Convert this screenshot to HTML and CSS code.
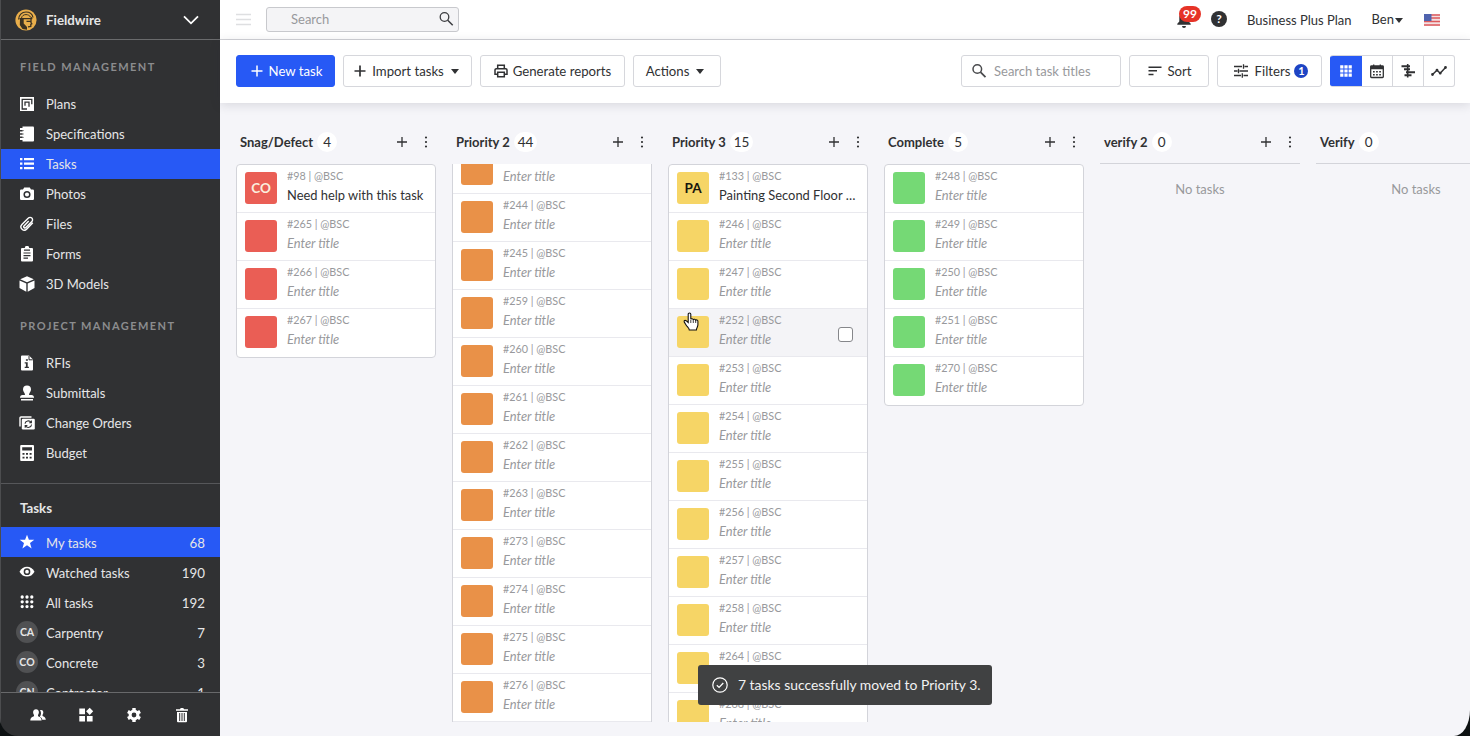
FILE: index.html
```
<!DOCTYPE html>
<html lang="en">
<head>
    <meta charset="UTF-8">
    <meta name="viewport" content="width=device-width, initial-scale=1.0">
    <title>Fieldwire - Tasks</title>
    <link rel="stylesheet" href="styles.css">
</head>
<body>
    <div class="app">
        <aside class="sidebar">
            <div class="brand">
                <svg class="logo" viewBox="0 0 22 22">
                    <circle cx="11" cy="11" r="10.6" fill="#e9ae4b"/>
                    <path d="M3.600 10.500C3.600 6 6.800 3 11 3c3.600 0 6.300 2 7 5.500" fill="none" stroke="#3a3122" stroke-width="1.200"/>
                    <path d="M6.500 9C7 6.800 8.600 5.600 11 5.600c2 0 3.800.9 4.500 2.600l1.800.8" fill="none" stroke="#3a3122" stroke-width="1"/>
                    <path d="M4.500 9.700h12.700M11.500 12.300h4.300M16 10v3.500l.8 1.300-1 .6v2l-2.800.4" fill="none" stroke="#3a3122" stroke-width="1.300"/>
                    <path d="M5 10h3.700v4.500l3.300 3.500v2.800l-4.500-.8L4.800 16z" fill="#3a3122"/>
                </svg>
                <span>Fieldwire</span>
                <svg class="chevron" viewBox="0 0 16 10"><path d="M1 1.300l7 7 7-7" fill="none" stroke="#fff" stroke-width="1.800"/></svg>
            </div>
            <nav class="menu">
                <h2>Field management</h2>
                <a class="item">
                    <svg viewBox="0 0 16 16"><path d="M1 1h14v14H1z" fill="#fff"/><path d="M8 13H3.200V3.300h9.600v5M6 9.800V6.200h4v4.600" fill="none" stroke="#303133" stroke-width="1.300"/></svg>
                    <span>Plans</span>
                </a>
                <a class="item">
                    <svg viewBox="0 0 16 16"><path d="M3.500.5H14a1 1 0 0 1 1 1v13a1 1 0 0 1-1 1H3.500z" fill="#fff"/><path d="M1 3h3M1 6.300h3M1 9.700h3M1 13h3" stroke="#fff" stroke-width="1.800"/><path d="M3.500 4.600h1M3.500 8h1M3.500 11.400h1" stroke="#303133"/></svg>
                    <span>Specifications</span>
                </a>
                <a class="item active">
                    <svg viewBox="0 0 16 16"><path d="M1 3.200h2.400M1 7.700h2.400M1 12.200h2.400M5 3.200h10M5 7.700h10M5 12.200h10" stroke="#fff" stroke-width="2.200"/></svg>
                    <span>Tasks</span>
                </a>
                <a class="item">
                    <svg viewBox="0 0 16 16"><path d="M5.200 1.500h5.600l1.200 2h1.800a1.200 1.200 0 0 1 1.200 1.200v8.100a1.200 1.200 0 0 1-1.200 1.200H2.200A1.200 1.200 0 0 1 1 12.800V4.700a1.200 1.200 0 0 1 1.200-1.200H4z" fill="#fff"/><circle cx="8" cy="8.500" r="2.800" fill="#fff" stroke="#303133" stroke-width="1.500"/></svg>
                    <span>Photos</span>
                </a>
                <a class="item">
                    <svg viewBox="0 0 16 16"><path d="M13.800 6.800l-6 6.300a3.300 3.300 0 0 1-4.900-4.600l6.500-6.400a2.400 2.400 0 0 1 3.500 3.300l-6 6.100a1.200 1.200 0 0 1-1.900-1.600l4.700-4.900" fill="none" stroke="#fff" stroke-width="1.400"/></svg>
                    <span>Files</span>
                </a>
                <a class="item">
                    <svg viewBox="0 0 16 16"><path d="M3 2h2.800a2.200 2.200 0 0 1 4.400 0H13a1 1 0 0 1 1 1v11.500a1 1 0 0 1-1 1H3a1 1 0 0 1-1-1V3a1 1 0 0 1 1-1z" fill="#fff"/><path d="M5 4.200h6M4.500 7h7M4.500 9.600h7M4.500 12.200h4.500" stroke="#303133" stroke-width="1.200"/></svg>
                    <span>Forms</span>
                </a>
                <a class="item">
                    <svg viewBox="0 0 16 16"><path d="M8 .3l6.800 2.900L8 6.200 1.200 3.200zM.5 4.500l6.800 3v8.200l-6.800-3.600zM15.500 4.500l-6.800 3v8.200l6.800-3.600z" fill="#fff"/></svg>
                    <span>3D Models</span>
                </a>
                <h2>Project management</h2>
                <a class="item">
                    <svg viewBox="0 0 16 16"><path d="M3 .5h7l4 4v10a1 1 0 0 1-1 1H3a1 1 0 0 1-1-1v-13a1 1 0 0 1 1-1z" fill="#fff"/><path d="M10 1v3.800h3.800" fill="none" stroke="#303133"/><path d="M6.900 4.200h2v1.600h-2zM5.700 7.200h3v4.500h1.200v1.200H5.700v-1.200h1.200V8.400H5.700z" fill="#303133"/></svg>
                    <span>RFIs</span>
                </a>
                <a class="item">
                    <svg viewBox="0 0 16 16"><path d="M8 .5a4 4 0 0 1 4 4c0 2.500-2 3-2 5.500h2.500A2.500 2.500 0 0 1 15 12v.8H1V12a2.500 2.500 0 0 1 2.500-2H6c0-2.500-2-3-2-5.500a4 4 0 0 1 4-4zM2 14h12v1.500H2z" fill="#fff"/></svg>
                    <span>Submittals</span>
                </a>
                <a class="item">
                    <svg viewBox="0 0 16 16"><path d="M1 11.500V3a1 1 0 0 1 1-1h10.500" fill="none" stroke="#fff" stroke-width="1.400"/><rect x="2.800" y="3.800" width="13" height="10.700" rx="1.200" fill="#fff"/><path d="M6 8.700a3.300 3.300 0 0 1 6-1.400M12.600 9.500a3.300 3.300 0 0 1-6 1.500M12.400 5.500v2.200h-2.200M6.200 12.800v-2.200h2.200" fill="none" stroke="#303133" stroke-width="1.100"/></svg>
                    <span>Change Orders</span>
                </a>
                <a class="item">
                    <svg viewBox="0 0 16 16"><rect x="1.200" y="0" width="13.800" height="16" rx="1" fill="#fff"/><path d="M3.200 2.300h9.800v3.300H3.200zM3.500 8h2v1.800h-2zM7 8h2v1.800H7zM10.600 8h2v1.800h-2zM3.500 11.800h2v1.800h-2zM7 11.800h2v1.800H7zM10.600 11.800h2v1.800h-2z" fill="#303133"/></svg>
                    <span>Budget</span>
                </a>
            </nav>
            <div class="filters">
                <h3>Tasks</h3>
                <a class="item active">
                    <svg viewBox="0 0 16 16"><path d="M8 .8l1.900 5h5.400l-4.300 3.300 1.600 5.400L8 11.300l-4.600 3.200L5 9.100.7 5.800h5.400z" fill="#fff"/></svg>
                    <span>My tasks</span><b>68</b>
                </a>
                <a class="item">
                    <svg viewBox="0 0 16 16"><path d="M.5 7.700C2.200 4.500 5 2.800 8 2.800s5.800 1.700 7.500 4.900C13.800 10.900 11 12.600 8 12.600S2.200 10.900.5 7.700z" fill="#fff"/><circle cx="8" cy="7.700" r="2.600" fill="none" stroke="#303133" stroke-width="1.500"/></svg>
                    <span>Watched tasks</span><b>190</b>
                </a>
                <a class="item">
                    <svg viewBox="0 0 16 16"><path d="M3.200 3h0M8 3h0M12.800 3h0M3.200 7.800h0M8 7.800h0M12.800 7.800h0M3.200 12.600h0M8 12.600h0M12.800 12.600h0" stroke="#fff" stroke-width="3.300" stroke-linecap="round"/></svg>
                    <span>All tasks</span><b>192</b>
                </a>
                <a class="item"><i>CA</i><span>Carpentry</span><b>7</b></a>
                <a class="item"><i>CO</i><span>Concrete</span><b>3</b></a>
                <a class="item"><i>CN</i><span>Contractor</span><b>1</b></a>
            </div>
            <div class="bottom">
                <svg viewBox="0 0 16 16"><path d="M10 3.200c2-.9 3.600.3 3.300 2.600-.1 1.200-.8 1.800-.8 2.600 0 1.200 3.300 1 3.300 4.300h-3.500c-.2-2-1.700-2.500-2.500-3 1.500-2 1.700-4.400.2-6.500z" fill="#fff"/><path d="M6 2.300c2 0 3 1.300 2.900 3.200-.1 1.500-1 2.200-1 3 0 1.500 3.700 1.200 3.700 4.900H.3c0-3.700 3.800-3.400 3.800-4.900 0-.8-.9-1.500-1-3C3 3.600 4 2.300 6 2.300z" fill="#fff"/></svg>
                <svg viewBox="0 0 16 16"><path d="M1.300 1.500h5.700v5.700H1.300zM1.300 8.900h5.700v5.700H1.300zM8.900 8.900h5.700v5.700H8.900zM11.700.7l3.500 3.600-3.500 3.600-3.600-3.600z" fill="#fff"/></svg>
                <svg viewBox="0 0 16 16"><circle cx="8" cy="8" r="3.900" fill="none" stroke="#fff" stroke-width="3"/><path d="M8 1v2.500M8 12.500V15M1.900 4.500l2.200 1.200M11.900 10.300l2.200 1.200M1.900 11.500l2.200-1.200M11.900 5.700l2.200-1.200" stroke="#fff" stroke-width="3.400"/></svg>
                <svg viewBox="0 0 16 16"><path d="M2 2.300h4l.7-1.300h2.600l.7 1.300h4v1.500H2zM3 5h10v9.300a1 1 0 0 1-1 1H4a1 1 0 0 1-1-1z" fill="#fff"/><path d="M5.700 6v8M8 6v8M10.300 6v8" stroke="#303133" stroke-width="1"/></svg>
            </div>
        </aside>
        <main class="main">
            <header class="topbar">
                <svg class="burger" viewBox="0 0 16 14"><path d="M0 1.500h15M0 6.500h15M0 11.500h15" stroke="#dedfe1" stroke-width="1.500"/></svg>
                <div class="search">
                    <span>Search</span>
                    <svg viewBox="0 0 16 16"><circle cx="6.500" cy="6" r="4.300" fill="none" stroke="#3c3d40" stroke-width="1.300"/><path d="M9.700 9.200l5 5" stroke="#3c3d40" stroke-width="1.500"/></svg>
                </div>
                <div class="account">
                    <div class="bell">
                        <svg viewBox="0 0 16 18"><path d="M8 1.500c3 0 4.700 2.200 4.700 5v4l2 2.300v.9H1.300v-.9l2-2.300v-4c0-2.800 1.700-5 4.700-5zM6 15h4a2 2 0 0 1-4 0z" fill="#303133"/></svg>
                        <span class="alert">99</span>
                    </div>
                    <div class="help">?</div>
                    <span class="plan">Business Plus Plan</span>
                    <span class="user">Ben<em class="caret"></em></span>
                    <svg class="flag" viewBox="0 0 16 12"><path d="M0 0h16v12H0z" fill="#f3dfe0"/><path d="M0 1h16M0 4h16M0 7.500h16M0 11h16" stroke="#dd5a5c" stroke-width="1.500"/><path d="M0 0h7.500v7H0z" fill="#4f63ae"/></svg>
                </div>
            </header>
            <div class="toolbar">
                <button class="btn primary"><svg viewBox="0 0 12 12"><path d="M6 .5v11M.5 6h11" stroke="#fff" stroke-width="1.500"/></svg>New task</button>
                <button class="btn import"><svg viewBox="0 0 12 12"><path d="M6 .5v11M.5 6h11" stroke="#303133" stroke-width="1.700"/></svg>Import tasks<em class="caret"></em></button>
                <button class="btn reports"><svg viewBox="0 0 14 14"><path d="M3.700 4.500V1.300h6.600v3.200M3.500 10.200H1V6a1.300 1.300 0 0 1 1.300-1.300h9.400A1.300 1.300 0 0 1 13 6v4.200h-2.500M3.700 8.300h6.600v4.500H3.700z" fill="none" stroke="#303133" stroke-width="1.500"/></svg>Generate reports</button>
                <button class="btn actions">Actions<em class="caret"></em></button>
                <div class="task-search">
                    <svg viewBox="0 0 16 16"><circle cx="6.300" cy="6" r="4.300" fill="none" stroke="#4a4b4e" stroke-width="1.500"/><path d="M9.500 9.200l5 5" stroke="#4a4b4e" stroke-width="1.800"/></svg>
                    <span>Search task titles</span>
                </div>
                <button class="btn sort"><svg viewBox="0 0 14 10"><path d="M.5 1.200h13M.5 4.800h8.500M.5 8.400h5" stroke="#303133" stroke-width="1.500"/></svg>Sort</button>
                <button class="btn filter"><svg viewBox="0 0 14 14"><path d="M0 2.500h8M10.500 2.500H14M9.500.3v4.400M0 7h3.500M5.500 7H14M4.500 4.800v4.400M0 11.500h7M9.500 11.500H14M8.300 9.300v4.400" stroke="#303133" stroke-width="1.300"/></svg>Filters<span class="count">1</span></button>
                <div class="views">
                    <div class="view on"><svg viewBox="0 0 16 16"><path d="M2.200 2.200h3.200v3.200H2.200zM6.400 2.200h3.200v3.200H6.400zM10.600 2.200h3.200v3.200h-3.200zM2.200 6.400h3.200v3.200H2.200zM6.400 6.400h3.200v3.200H6.400zM10.600 6.400h3.200v3.200h-3.200zM2.200 10.600h3.200v3.200H2.200zM6.400 10.600h3.200v3.200H6.400zM10.600 10.600h3.200v3.200h-3.200z" fill="#fff"/></svg></div>
                    <div class="view"><svg viewBox="0 0 16 16"><path d="M2.500 3h11a.8.8 0 0 1 .8.800v9.900a.8.8 0 0 1-.8.800h-11a.8.8 0 0 1-.8-.8V3.800a.8.8 0 0 1 .8-.8zM4.700 1.500v2M11.300 1.500v2" fill="none" stroke="#303133" stroke-width="1.300"/><path d="M1.700 3h12.600v3.300H1.700z" fill="#303133"/><path d="M4 8.700h8M4 11.800h8" stroke="#303133" stroke-width="1.500" stroke-dasharray="1.700 1.400"/></svg></div>
                    <div class="view"><svg viewBox="0 0 16 16"><path d="M7.700 1v13.500" stroke="#303133" stroke-width="1.600"/><path d="M1.500 3.300h8.500M4 6.300h6M6 9.300h9M4.500 12.300h7" stroke="#303133" stroke-width="1.900"/></svg></div>
                    <div class="view"><svg viewBox="0 0 16 16"><path d="M1.500 11.500L6 7.200l3.200 3L14.500 4.500" fill="none" stroke="#303133" stroke-width="1.500"/><path d="M1.500 11.500h0M6 7.200h0M9.200 10.200h0M14.500 4.500h0" stroke="#303133" stroke-width="2.800" stroke-linecap="round"/></svg></div>
                </div>
            </div>
            <section class="board" id="board"></section>
        </main>
        <div class="toast">
            <svg viewBox="0 0 16 16"><circle cx="8" cy="8" r="7.200" fill="none" stroke="#fff" stroke-width="1.200"/><path d="M4.800 8.200l2.300 2.200 4.200-4.400" fill="none" stroke="#fff" stroke-width="1.300"/></svg>
            <span>7 tasks successfully moved to Priority 3.</span>
        </div>
        <svg class="pointer" viewBox="0 0 16 20"><path d="M5.200 10.500V2.300a1.300 1.300 0 0 1 2.600 0v5c.3-.9 2.300-.8 2.500.4.500-.8 2.200-.6 2.400.6.600-.7 2.200-.4 2.200 1v3.500c0 2.200-1.500 3-1.500 5.200H6.300c0-1.800-2.300-3.200-3.400-5.300L1.200 9.900c-.5-1.200.9-2 1.900-1.200z" fill="#fff" stroke="#111" stroke-width="1.100"/><path d="M7.800 8v3M10.300 8.500V11M12.700 9v2" stroke="#111" stroke-width=".8"/></svg>
    </div>
    <script>
        const columns = [
            {name:'Snag/Defect',count:4,color:'red',tasks:[98,265,266,267]},
            {name:'Priority 2',count:44,color:'orange',scrolled:true,tasks:[243,244,245,259,260,261,262,263,273,274,275,276,277]},
            {name:'Priority 3',count:15,color:'yellow',tasks:[133,246,247,252,253,254,255,256,257,258,264,268,269]},
            {name:'Complete',count:5,color:'green',tasks:[248,249,250,251,270]},
            {name:'verify 2',count:0,tasks:[]},
            {name:'Verify',count:0,tasks:[]}
        ];
        const named = {
            98:{tag:'CO',title:'Need help with this task'},
            133:{tag:'PA',title:'Painting Second Floor Lobby'}
        };
        const hovered = 252;
        function card(id,color){
            const info = named[id];
            return `<div class="card ${id===hovered?'hover':''}">
                <div class="swatch ${color}">${info?info.tag:''}</div>
                <div class="text">
                    <small>#${id} | @BSC</small>
                    <p class="${info?'':'empty'}">${info?info.title:'Enter title'}</p>
                </div>
                ${id===hovered?'<div class="check"></div>':''}
            </div>`;
        }
        document.getElementById('board').innerHTML = columns.map(col=>`
            <div class="column">
                <div class="column-head">
                    <strong>${col.name}</strong>
                    <span class="total">${col.count}</span>
                    <svg class="add" viewBox="0 0 10 10"><path d="M5 0v10M0 5h10" stroke="#303133" stroke-width="1.300"/></svg>
                    <svg class="more" viewBox="0 0 4 12"><path d="M2 1.500h0M2 6h0M2 10.500h0" stroke="#303133" stroke-width="2.200" stroke-linecap="round"/></svg>
                </div>
                ${col.tasks.length
                    ?`<div class="scroll"><div class="list ${col.scrolled?'scrolled':''}">${col.tasks.map(id=>card(id,col.color)).join('')}</div></div>`
                    :'<div class="none">No tasks</div>'}
            </div>`).join('');
    </script>
</body>
</html>
```

FILE: styles.css
```
*{
    box-sizing: border-box;
}
body{
    margin: 0;
    background-color: #0d1112;
    font-family: Lato, "Liberation Sans", sans-serif;
    font-size: 13px;
    color: #303133;
    overflow: hidden;
}
svg{
    display: block;
    flex: none;
}
h2, h3, p{
    margin: 0;
}
.app{
    display: flex;
    position: relative;
    height: 736px;
    border-radius: 0 0 16px 18px / 0 0 26px 18px;
    overflow: hidden;
}

/* sidebar */
.sidebar{
    width: 220px;
    flex: none;
    display: flex;
    flex-direction: column;
    background-color: #303133;
    color: #e6e6e7;
    border-left: 1px solid #4c4d4f;
}
.brand{
    height: 40px;
    display: flex;
    align-items: center;
    padding: 0 21px 0 14px;
    border-bottom: 1px solid #6a6b6d;
    font-size: 13.3px;
    font-weight: bold;
}
.logo{
    width: 22px;
    height: 22px;
    margin-right: 9px;
}
.chevron{
    width: 16px;
    height: 10px;
    margin-left: auto;
}
.menu{
    height: 444px;
    border-bottom: 1px solid #56575a;
}
.menu h2{
    height: 49px;
    padding-left: 19px;
    font-size: 11px;
    line-height: 54px;
    letter-spacing: 1.45px;
    text-transform: uppercase;
    color: #8b8c8e;
    font-weight: bold;
}
.item{
    display: flex;
    align-items: center;
    height: 30px;
    padding: 0 15px 0 18px;
}
.menu .item span{
    padding-bottom: 1px;
}
.item svg{
    width: 16px;
    height: 16px;
    margin-right: 11px;
}
.item b{
    margin-left: auto;
    font-size: 13.3px;
    font-weight: normal;
}
.item i{
    width: 22px;
    height: 22px;
    margin: -1px 8px 0 -3px;
    border-radius: 50%;
    background-color: #505153;
    font-size: 10.5px;
    font-style: normal;
    font-weight: bold;
    line-height: 22px;
    text-align: center;
}
.active{
    background-color: #2759f5;
}
.filters{
    height: 208px;
    overflow: hidden;
}
.filters .item{
    padding-top: 1px;
}
.filters .item svg{
    margin-top: -1px;
}
.filters h3{
    height: 43px;
    padding-left: 19px;
    font-size: 13.3px;
    line-height: 48px;
}
.bottom{
    flex: 1;
    display: flex;
    align-items: center;
    gap: 32px;
    padding-left: 29px;
    border-top: 1px solid #68696b;
}
.bottom svg{
    width: 16px;
    height: 16px;
}

/* header */
.main{
    flex: 1;
    min-width: 0;
    display: flex;
    flex-direction: column;
    background-color: #f5f5f9;
}
.topbar{
    height: 40px;
    flex: none;
    display: flex;
    align-items: center;
    padding: 0 30px 0 16px;
    background-color: #fff;
    border-bottom: 1px solid #d2d3d7;
}
.burger{
    width: 16px;
    height: 14px;
}
.search{
    width: 193px;
    height: 25px;
    margin: -1px 0 0 14px;
    padding: 0 4px 0 24px;
    display: flex;
    align-items: center;
    justify-content: space-between;
    background-color: #f4f4f6;
    border: 1px solid #c8c9cd;
    border-radius: 3px;
    color: #98999c;
}
.search svg{
    width: 16px;
    height: 16px;
}
.account{
    display: flex;
    align-items: center;
    margin-left: auto;
}
.bell{
    position: relative;
    margin-right: 19px;
}
.bell svg{
    width: 16px;
    height: 18px;
}
.alert{
    position: absolute;
    left: 3px;
    top: -5px;
    width: 22px;
    height: 16px;
    border-radius: 8px;
    background-color: #e63327;
    color: #fff;
    font-size: 12px;
    font-weight: bold;
    line-height: 16px;
    text-align: center;
}
.help{
    width: 16px;
    height: 16px;
    margin: -2px 20px 0 0;
    border-radius: 50%;
    background-color: #303133;
    color: #fff;
    font-size: 12px;
    font-weight: bold;
    line-height: 16px;
    text-align: center;
}
.plan{
    margin-right: 20px;
}
.user{
    margin: -1px 21px 0 0;
    display: flex;
    align-items: center;
}
.user .caret{
    margin: 2px 0 0 1px;
}
.flag{
    width: 16px;
    height: 12px;
}
.caret{
    border: 4px solid transparent;
    border-top: 5px solid #303133;
    border-bottom: 0;
}

/* toolbar */
.toolbar{
    height: 63px;
    flex: none;
    display: flex;
    align-items: center;
    padding: 0 15px 1px 16px;
    background-color: #fff;
    box-shadow: 0 2px 10px rgba(40, 42, 60, 0.14);
}
.btn{
    height: 32px;
    margin: 0 8px 0 0;
    padding: 0;
    display: flex;
    align-items: center;
    justify-content: center;
    background-color: #fff;
    border: 1px solid #d6d7dc;
    border-radius: 3px;
    color: #303133;
    font-family: inherit;
    font-size: 13.2px;
}
.btn svg{
    width: 14px;
    height: 14px;
    margin-right: 5px;
}
.btn .caret{
    margin-left: 7px;
}
.btn.primary{
    width: 99px;
    padding-left: 2px;
    background-color: #2759f5;
    border-color: #2759f5;
    color: #fff;
}
.btn.primary svg, .btn.import svg{
    width: 12px;
    height: 12px;
    margin-right: 6px;
}
.btn.import{
    width: 129px;
    padding-right: 2px;
}
.reports{
    width: 145px;
}
.btn.actions{
    width: 88px;
    padding-right: 4px;
}
.task-search{
    width: 160px;
    height: 32px;
    margin: 0 8px 0 auto;
    padding-left: 9px;
    display: flex;
    align-items: center;
    border: 1px solid #d6d7dc;
    border-radius: 3px;
    color: #98999c;
}
.task-search svg{
    width: 16px;
    height: 16px;
    margin-right: 7px;
}
.btn.sort{
    width: 80px;
    padding-left: 2px;
}
.btn.sort svg{
    height: 10px;
}
.btn.filter{
    width: 105px;
    padding-left: 3px;
}
.btn.filter svg{
    margin-right: 7px;
}
.count{
    width: 14px;
    height: 14px;
    margin-left: 4px;
    border-radius: 50%;
    background-color: #1d44c4;
    color: #fff;
    font-size: 11px;
    font-weight: bold;
    line-height: 14px;
}
.views{
    display: flex;
    height: 32px;
    border: 1px solid #d6d7dc;
    border-left: 0;
    border-radius: 3px;
    overflow: hidden;
}
.view{
    width: 31px;
    display: flex;
    align-items: center;
    justify-content: center;
    border-left: 1px solid #d6d7dc;
}
.view svg{
    width: 16px;
    height: 16px;
}
.view.on{
    width: 32px;
    margin: -1px 0;
    background-color: #2759f5;
    border: 0;
}
.view.on + .view{
    width: 30px;
    border: 0;
}

/* board */
.board{
    flex: 1;
    display: flex;
    gap: 16px;
    padding: 17px 0 0 16px;
    overflow: hidden;
}
.column{
    width: 200px;
    flex: none;
}
.column-head{
    height: 44px;
    display: flex;
    align-items: center;
    padding: 0 8px 0 4px;
}
.column-head strong, .total{
    margin-top: -1px;
}
.total{
    min-width: 20px;
    height: 20px;
    margin-left: 4px;
    padding: 0 4px;
    border-radius: 10px;
    background-color: #fff;
    font-size: 13.5px;
    line-height: 20px;
    text-align: center;
}
.add{
    width: 10px;
    height: 10px;
    margin-left: auto;
}
.more{
    width: 4px;
    height: 12px;
    margin-left: 17px;
}
.scroll{
    height: 558px;
    overflow: hidden;
}
.list{
    border: 1px solid #d3d4da;
    border-radius: 4px;
    background-color: #fff;
    overflow: hidden;
}
.list.scrolled{
    margin-top: -19px;
}
.card{
    height: 48px;
    display: flex;
    padding: 7px 10px 0 8px;
    border-bottom: 1px solid #e9e9ee;
}
.card:last-child{
    border-bottom: 0;
}
.card.hover{
    background-color: #f4f4f7;
}
.swatch{
    width: 32px;
    height: 32px;
    flex: none;
    margin-right: 10px;
    border-radius: 3px;
    font-size: 13.5px;
    font-weight: bold;
    line-height: 32px;
    text-align: center;
}
.red{
    background-color: #ea5e55;
    color: #fbeedd;
}
.orange{
    background-color: #e99148;
}
.yellow{
    background-color: #f6d566;
    color: #17160f;
}
.green{
    background-color: #75d975;
}
.text{
    flex: 1;
    min-width: 0;
}
.card small{
    display: block;
    margin-top: -4px;
    font-size: 10.8px;
    line-height: 16px;
    color: #98999c;
}
.card p{
    padding-top: 1px;
    font-size: 12.9px;
    line-height: 20px;
    white-space: nowrap;
    overflow: hidden;
    text-overflow: ellipsis;
}
.card p.empty{
    color: #98999c;
    font-style: italic;
}
.check{
    width: 15px;
    height: 15px;
    margin: 11px 4px 0 0;
    border: 1px solid #86878b;
    border-radius: 3px;
    background-color: #fff;
}
.none{
    margin-top: -1px;
    border-top: 1px solid #d3d4da;
    line-height: 51px;
    text-align: center;
    color: #98999c;
}

/* overlays */
.toast{
    position: absolute;
    left: 698px;
    top: 665px;
    width: 294px;
    height: 40px;
    display: flex;
    align-items: center;
    padding-left: 14px;
    border-radius: 3px;
    background-color: #404142;
    color: #f2f2f2;
    font-size: 13.9px;
}
.toast span{
    padding-bottom: 1px;
}
.toast svg{
    width: 16px;
    height: 16px;
    margin-right: 10px;
}
.pointer{
    position: absolute;
    left: 683px;
    top: 312px;
    width: 16px;
    height: 20px;
}
```
